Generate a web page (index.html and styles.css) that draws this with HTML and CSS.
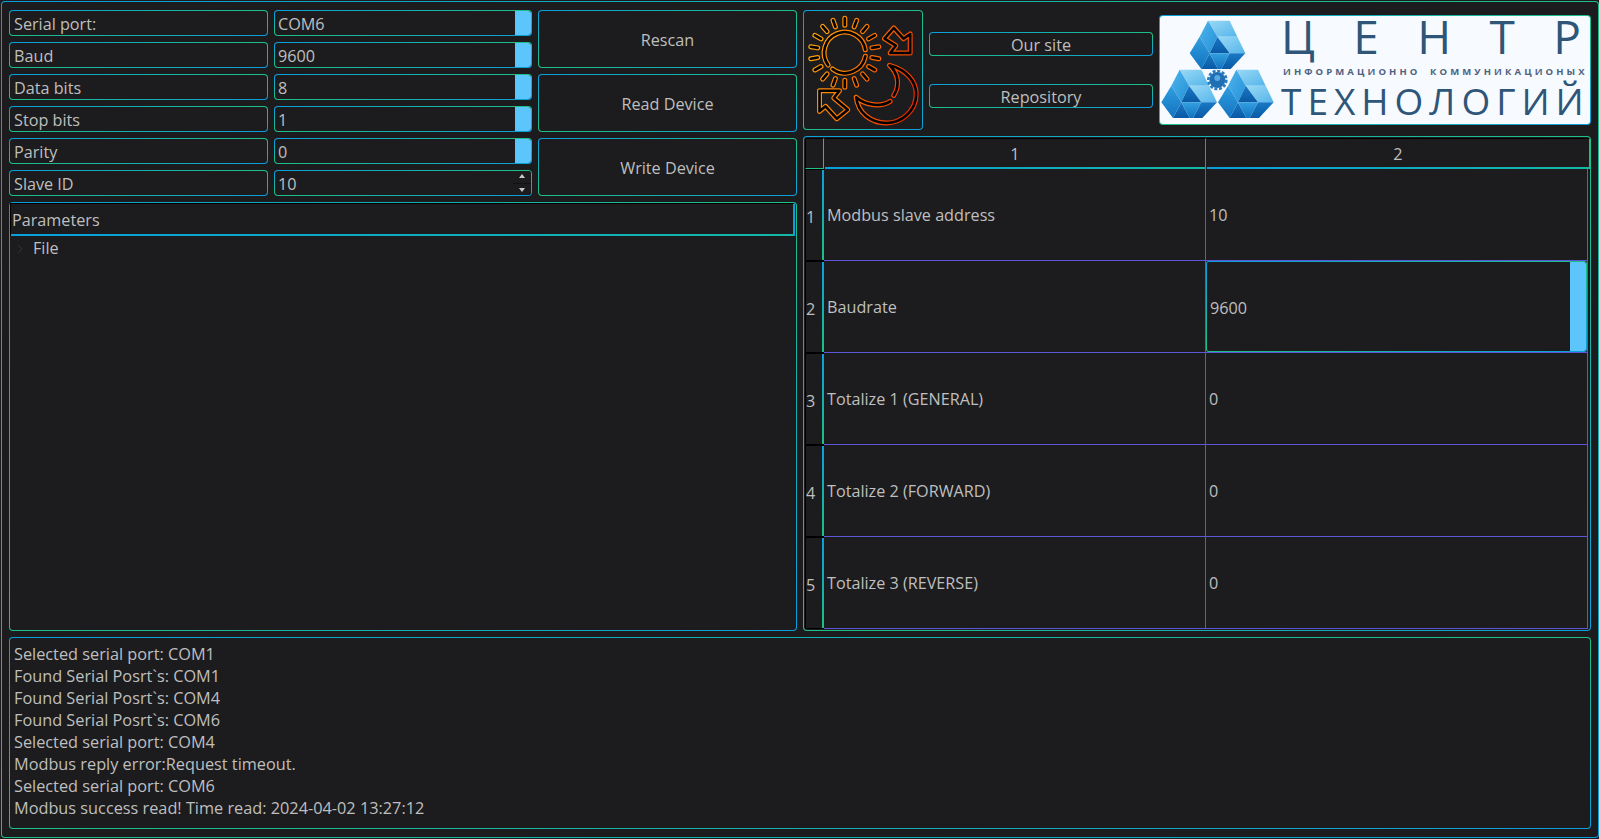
FILE: index.html
```
<!DOCTYPE html>
<html lang="en">
<head>
<meta charset="utf-8">
<title>Modbus Configurator</title>
<link rel="stylesheet" href="styles.css">
</head>
<body>
<div class="window frame">
  <div class="main">
    <section class="col">
      <div class="form">
        <div class="label frame">Serial port:</div>
        <div class="combo frame"><span class="val">COM6</span><span class="drop"></span></div>
        <div class="btn frame">Rescan</div>
        <div class="label frame">Baud</div>
        <div class="combo frame"><span class="val">9600</span><span class="drop"></span></div>
        <div class="label frame">Data bits</div>
        <div class="combo frame"><span class="val">8</span><span class="drop"></span></div>
        <div class="btn frame">Read Device</div>
        <div class="label frame">Stop bits</div>
        <div class="combo frame"><span class="val">1</span><span class="drop"></span></div>
        <div class="label frame">Parity</div>
        <div class="combo frame"><span class="val">0</span><span class="drop"></span></div>
        <div class="btn frame">Write Device</div>
        <div class="label frame">Slave ID</div>
        <div class="combo frame"><span class="val">10</span><span class="spin"><i class="up"></i><i class="down"></i></span></div>
      </div>
      <div class="tree frame">
        <div class="tree-head">Parameters</div>
        <div class="tree-item"><svg class="chev" viewBox="0 0 8 10" width="8" height="10"><path d="M2 1l4 4-4 4" fill="none" stroke="#333336" stroke-width="1"/></svg>File</div>
      </div>
    </section>
    <section class="col">
      <div class="top">
        <div class="icon-box frame">
          <svg viewBox="1.5 1 118 118" width="118" height="118">
            <defs>
              <linearGradient id="heat" gradientUnits="userSpaceOnUse" x1="5" y1="40" x2="113" y2="80">
                <stop offset="0" stop-color="#ffa50a"/>
                <stop offset=".55" stop-color="#f96a00"/>
                <stop offset="1" stop-color="#e92c00"/>
              </linearGradient>
              <g id="sm">
                <path d="M42.3 15.2V8.2M51.7 16.9L54.1 10.3M60 21.6L64.5 16.3M66.1 28.9L72.2 25.4M69.4 37.9L76.3 36.7M69.4 47.5L76.3 48.7M66.1 56.5L72.2 60M60 63.8L64.5 69.1M51.7 68.5L54.1 75.1M42.3 70.2V77.2M32.9 68.5L30.5 75.1M24.6 63.8L20.1 69.1M18.5 56.5L12.4 60M15.2 47.5L8.3 48.7M15.2 37.9L8.3 36.7M18.5 28.9L12.4 25.4M24.6 21.6L20.1 16.3M32.9 16.9L30.5 10.3"/>
                <path d="M62.8 39.8A20.7 20.7 0 1 0 25.7 55.1"/>
                <path d="M30 59A20.7 20.7 0 0 0 62.8 46.3"/>
                <path d="M91.3 85.3C98 74.7 95.3 63 87 55.3C103.7 59.7 113.7 71.3 113.7 84C113.7 101.3 98.7 113 83.7 113C68.7 113 55.3 103 53.7 87.3C62 94.7 77 98 87.7 91.3"/>
                <path d="M107.7 24V43H87.7L93.3 35.7L82 28.7L91.3 18L101 28.7Z"/>
                <path d="M17 80.7H37L31.3 88L45.3 99.7L34.3 108.7L23 96.3L17 101.3Z"/>
              </g>
            </defs>
            <use href="#sm" class="glow"/>
            <use href="#sm" class="core"/>
          </svg>
        </div>
        <div class="links">
          <div class="link frame">Our site</div>
          <div class="link frame">Repository</div>
        </div>
        <div class="logo frame">
          <svg class="logo-mark" viewBox="6 6 375 324" width="125" height="108">
            <defs>
              <linearGradient id="f1" x1="0" y1="0" x2="1" y2="1"><stop offset="0" stop-color="#9ad9f6"/><stop offset="1" stop-color="#55b5ea"/></linearGradient>
              <linearGradient id="f2" x1="0" y1="0" x2="1" y2="1"><stop offset="0" stop-color="#4fb3ea"/><stop offset="1" stop-color="#2392d9"/></linearGradient>
              <linearGradient id="f3" x1="0" y1="0" x2="0" y2="1"><stop offset="0" stop-color="#329fe0"/><stop offset="1" stop-color="#1173bf"/></linearGradient>
              <linearGradient id="f4" x1="0" y1="0" x2="0" y2="1"><stop offset="0" stop-color="#1879c6"/><stop offset="1" stop-color="#0a5aa4"/></linearGradient>
              <g id="cluster">
                <path d="M55 2H120L143 50H83Z" fill="url(#f1)"/>
                <path d="M55 2L83 50L60 100L30 50Z" fill="url(#f2)"/>
                <path d="M30 50L60 100L35 147L0 100Z" fill="url(#f3)"/>
                <path d="M83 50H143L167 100H120Z" fill="url(#f1)"/>
                <path d="M83 50L120 100H60Z" fill="url(#f4)"/>
                <path d="M60 100L85 147H35Z" fill="url(#f4)"/>
                <path d="M60 100H120L95 147H85Z" fill="url(#f3)"/>
                <path d="M120 100H167L123 147H95Z" fill="url(#f4)"/>
              </g>
            </defs>
            <use href="#cluster" x="95" y="18"/>
            <use href="#cluster" x="10" y="165"/>
            <use href="#cluster" x="180" y="165"/>
            <circle cx="178" cy="198" r="19" fill="#1f6fb5" stroke="#1f6fb5" stroke-width="10"/>
            <circle cx="178" cy="198" r="27" fill="none" stroke="#2a7cc0" stroke-width="8" stroke-dasharray="9 5"/>
            <circle cx="178" cy="192" r="9" fill="#5aa8e0"/>
          </svg>
          <div class="logo-text">
            <div class="l1">Ц Е Н Т Р</div>
            <div class="l2">ИНФОРМАЦИОННО КОММУНИКАЦИОНЫХ</div>
            <div class="l3">ТЕХНОЛОГИЙ</div>
          </div>
        </div>
      </div>
      <div class="table frame">
        <div class="grid">
          <div class="corner"></div>
          <div class="hcell">1</div>
          <div class="hcell last">2</div>

          <div class="rhead">1</div>
          <div class="cell">Modbus slave address</div>
          <div class="cell">10</div>

          <div class="rhead">2</div>
          <div class="cell">Baudrate</div>
          <div class="cell sel-wrap"><div class="selected frame"><span class="val">9600</span><span class="drop"></span></div></div>

          <div class="rhead">3</div>
          <div class="cell">Totalize 1 (GENERAL)</div>
          <div class="cell">0</div>

          <div class="rhead">4</div>
          <div class="cell">Totalize 2 (FORWARD)</div>
          <div class="cell">0</div>

          <div class="rhead">5</div>
          <div class="cell">Totalize 3 (REVERSE)</div>
          <div class="cell">0</div>
        </div>
      </div>
    </section>
  </div>
  <div class="log frame">
    <div>Selected serial port: COM1</div>
    <div>Found Serial Posrt`s: COM1</div>
    <div>Found Serial Posrt`s: COM4</div>
    <div>Found Serial Posrt`s: COM6</div>
    <div>Selected serial port: COM4</div>
    <div>Modbus reply error:Request timeout.</div>
    <div>Selected serial port: COM6</div>
    <div>Modbus success read! Time read: 2024-04-02 13:27:12</div>
  </div>
</div>
</body>
</html>
```
FILE: styles.css
```
* { box-sizing: border-box; }
html, body { margin: 0; height: 100%; background: #1c1c1e; overflow: hidden; }
body {
  --bg: #1c1c1e;
  --b: #0a9fdc;
  --g: #1fbf85;
  --txt: #bfbfbf;
  font-family: "Open Sans", "Noto Sans", sans-serif;
  font-size: 16.2px;
  color: var(--txt);
  padding: 1px 0 1px 1px;
}
.frame {
  border: 1px solid transparent;
  border-radius: 4px;
  background:
    linear-gradient(var(--bg), var(--bg)) padding-box,
    linear-gradient(90deg, var(--b), var(--g)) top / 100% 6px no-repeat border-box,
    linear-gradient(90deg, var(--g), var(--b)) bottom / 100% 6px no-repeat border-box,
    linear-gradient(var(--b), var(--g)) left / 6px 100% no-repeat border-box,
    linear-gradient(var(--g), var(--b)) right / 6px 100% no-repeat border-box;
}
.window {
  width: 1598px;
  height: 837px;
  padding: 8px 7px 8px 7px;
  display: flex;
  flex-direction: column;
  gap: 6px;
}
.main { display: grid; grid-template-columns: 788px 788px; column-gap: 6px; height: 621px; }
.col { display: flex; flex-direction: column; gap: 6px; min-height: 0; }

.form {
  display: grid;
  grid-template-columns: 259px 258px 259px;
  grid-auto-rows: 26px;
  gap: 6px;
  height: 186px;
}
.label, .combo { display: flex; align-items: center; line-height: 24px; overflow: hidden; }
.label { padding: 1px 0 0 4px; }
.combo .val { flex: 1; padding: 1px 0 0 3px; }
.drop { width: 16px; align-self: stretch; background: #5cc5fb; flex: none; }
.spin { width: 18px; align-self: stretch; display: flex; flex-direction: column; gap: 1px; flex: none; background: #111; }
.spin i { flex: 1; background: #1c1c1e; position: relative; display: block; }
.spin i::after { content: ""; position: absolute; left: 6px; border-left: 3px solid transparent; border-right: 3px solid transparent; }
.spin .up::after { top: 3px; border-bottom: 4px solid #c8c8c8; }
.spin .down::after { top: 4px; border-top: 4px solid #c8c8c8; }
.btn { grid-row: span 2; grid-column: 3; display: flex; align-items: center; justify-content: center; padding-top: 2px; }
.form .btn:nth-of-type(3) { grid-row: 1 / span 2; }

.tree { flex: 1; min-height: 0; padding-right: 1px; }
.tree-head {
  height: 33px;
  line-height: 32px;
  padding-left: 1px;
  border-top: 1px solid #000;
  border-left: 1px solid #000;
  border-right: 2px solid var(--b);
  background: linear-gradient(90deg, #0a9fdc, #14b8a6) bottom / 100% 2px no-repeat;
}
.tree-item { display: flex; align-items: center; height: 25px; padding-left: 6px; gap: 9px; line-height: 25px; }
.chev { flex: none; }

.top { display: flex; align-items: center; gap: 6px; height: 120px; flex: none; }
.icon-box { width: 120px; height: 120px; flex: none; }
.icon-box svg { display: block; }
.glow { fill: none; stroke: url(#heat); stroke-width: 5; stroke-linecap: round; stroke-linejoin: round; }
.core { fill: none; stroke: #000; stroke-width: 2.6; stroke-linecap: round; stroke-linejoin: round; }
.links { width: 224px; flex: none; display: flex; flex-direction: column; gap: 28px; }
.link { height: 24px; display: flex; align-items: center; justify-content: center; line-height: 22px; padding-top: 1px; }
.logo {
  width: 432px;
  height: 110px;
  flex: none;
  display: flex;
  --bg: #f7fbff;
}
.logo-mark { flex: none; display: block; }
.logo-text { flex: 1; color: #2f5678; padding: 0 6px 0 0; min-width: 0; }
.l1 {
  font-size: 46px;
  line-height: 40px;
  height: 40px;
  margin: 0 0 0 -4px;
  padding: 0 3px 0 0;
  text-align: justify;
  text-align-last: justify;
}
.l2 {
  font-size: 9.5px;
  font-weight: 700;
  line-height: 12px;
  letter-spacing: 3.1px;
  margin-top: 10px;
  margin-left: -2px;
  color: #4f6280;
  white-space: nowrap;
  word-spacing: 4px;
}
.l3 {
  font-size: 37px;
  line-height: 40px;
  letter-spacing: 6px;
  white-space: nowrap;
  margin: 3px 0 0 -4px;
}

.table { flex: 1; min-height: 0; padding: 1px 2px 1px 1px; }
.grid {
  display: grid;
  grid-template-columns: 19px 382px 382px;
  grid-template-rows: 31px repeat(5, 92px);
}
.corner {
  border-top: 1px solid #000;
  border-left: 1px solid #000;
  border-right: 1px solid var(--g);
  border-bottom: 1px solid var(--g);
}
.hcell {
  display: flex;
  align-items: center;
  justify-content: center;
  border-top: 1px solid #000;
  border-right: 1px solid var(--b);
  margin-left: 1px;
  padding-bottom: 1px;
  background: linear-gradient(90deg, #0a9fdc, #14b8a6) bottom / 100% 2px no-repeat;
}
.hcell.last { border-right-color: var(--g); margin-right: -2px; }
.rhead {
  display: flex;
  align-items: center;
  padding: 4px 0 0 0;
  border-left: 1px solid #000;
  border-top: 1px solid #000;
  border-bottom: 1px solid #000;
  background: linear-gradient(var(--b), var(--g)) right / 2px 100% no-repeat;
}
.cell {
  display: flex;
  align-items: center;
  padding-left: 3px;
  border-right: 1px solid #5b55d8;
  border-bottom: 1px solid #5b55d8;
}
.sel-wrap { padding: 0; }
.selected { flex: 1; align-self: stretch; display: flex; align-items: center; border-radius: 3px; overflow: hidden; padding-top: 1px; }
.selected .val { flex: 1; padding-left: 3px; padding-top: 2px; }
.selected .drop { margin-top: -1px; }

.log { flex: 1; min-height: 0; padding: 5px 4px 3px; line-height: 22px; font-size: 16.3px; }
```
